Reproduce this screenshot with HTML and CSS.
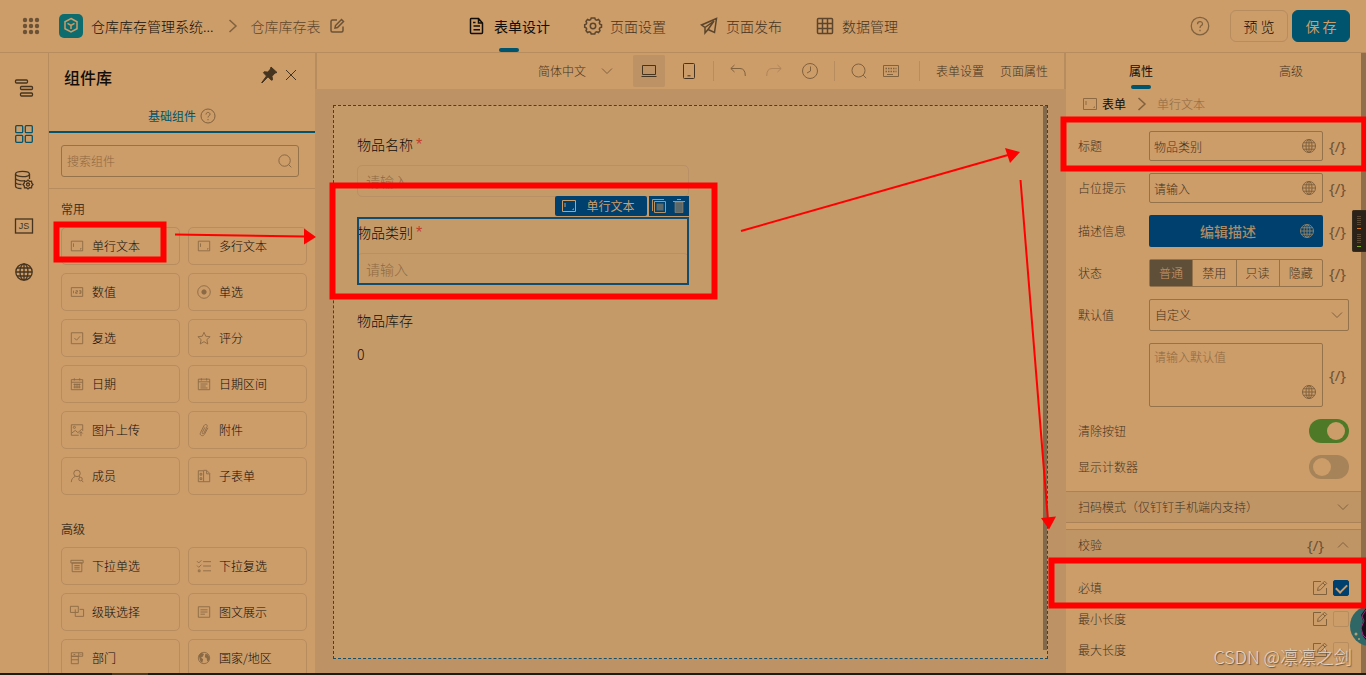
FILE: index.html
```html
<!DOCTYPE html>
<html lang="zh-CN">
<head>
<meta charset="utf-8">
<title>仓库库存表</title>
<link rel="stylesheet" href="styles.css">
</head>
<body>
<svg class="defs" aria-hidden="true">
  <symbol id="globe" viewBox="0 0 16 16"><circle cx="8" cy="8" r="6.500"/><ellipse cx="8" cy="8" rx="3" ry="6.500"/><path d="M8 1.500v13M1.500 8h13M2.500 4.800h11M2.500 11.200h11"/></symbol>
  <symbol id="field" viewBox="0 0 16 16"><path d="M1.500 2.500h13v11h-13zM4 5v4M12.500 10.500v1h-1"/></symbol>
  <symbol id="help" viewBox="0 0 16 16"><circle cx="8" cy="8" r="7"/><path d="M6 6.500c0-2.700 4-2.700 4-.2C10 7.800 8 7.600 8 9.500M8 11v1.200"/></symbol>
  <symbol id="search" viewBox="0 0 16 16"><circle cx="7.500" cy="7.500" r="6.500"/><path d="M12.200 12.200l3 3"/></symbol>
  <symbol id="edit" viewBox="0 0 16 16"><path d="M9 1.500H1.500v13h13V8M5.500 10.500l.7-3L12.500 1.200l2.200 2.200-6.300 6.400zM11 3l2 2"/></symbol>
  <symbol id="down" viewBox="0 0 12 12"><path d="M1 3.500l5 5 5-5"/></symbol>
  <symbol id="right" viewBox="0 0 10 16"><path d="M1.500 2l6.500 6-6.500 6"/></symbol>
</svg>

<header class="top">
  <div class="top-left">
    <svg class="dots" viewBox="0 0 18 18"><g fill="currentColor" stroke="none"><circle cx="3" cy="3" r="2.200"/><circle cx="9" cy="3" r="2.200"/><circle cx="15" cy="3" r="2.200"/><circle cx="3" cy="9" r="2.200"/><circle cx="9" cy="9" r="2.200"/><circle cx="15" cy="9" r="2.200"/><circle cx="3" cy="15" r="2.200"/><circle cx="9" cy="15" r="2.200"/><circle cx="15" cy="15" r="2.200"/></g></svg>
    <svg class="logo" viewBox="0 0 24 24"><path d="M12 4.500l6 3.300v6.900L12 18l-6-3.300V7.800zM8.500 9.300L12 11.300l3.500-2M12 11.300V15"/></svg>
    <span class="app-name">仓库库存管理系统...</span>
    <svg class="sep"><use href="#right"/></svg>
    <span class="page-name">仓库库存表</span>
    <svg class="ic16 w2" viewBox="0 0 16 16"><path d="M8 2H3.500Q2 2 2 3.500v9Q2 14 3.500 14h9q1.500 0 1.500-1.500V8.500M6 10l.5-2.500 6-6 2 2-6 6z"/></svg>
  </div>
  <nav class="tabs">
    <a class="tab active" href="#"><svg class="ic18 w2" viewBox="0 0 18 18"><path d="M3 1.500Q2.500 1.500 2.500 2.500v13q0 1 1 1h10q1 0 1-1V6L10.500 1.500zM10.500 2v4h4M5.500 9h6.500M5.500 12.800h6.500M5 5.500h2.500"/></svg>表单设计</a>
    <a class="tab" href="#"><svg class="ic18 w2" viewBox="0 0 18 18"><path d="M7.200 1h3.600l.6 1.700 1.400.6 1.700-.8 1.500 1.900-.7 1.500.6 1.300 1.600.6v2.400l-1.600.6-.6 1.300.7 1.500-1.500 1.900-1.700-.8-1.400.6-.6 1.700H7.200l-.6-1.700-1.400-.6-1.700.8L2 13.600l.7-1.500-.6-1.300L.7 10.200V7.800l1.400-.6.6-1.300L2 4.400l1.500-1.900 1.700.8 1.400-.6z"/><circle cx="9" cy="9" r="2.700"/></svg>页面设置</a>
    <a class="tab" href="#"><svg class="ic18 w2" viewBox="0 0 18 18"><path d="M16.500 1.500L1.500 8l3.500 2.500v5.500l3-3.500 6.500 3zM5 10.500l9-6.500-6 8.500"/></svg>页面发布</a>
    <a class="tab" href="#"><svg class="ic18 w2" viewBox="0 0 18 18"><rect x="1.500" y="1.500" width="15" height="15" rx="1"/><path d="M6.500 2v14M11.500 2v14M2 6.500h14M2 11.500h14"/></svg>数据管理</a>
  </nav>
  <div class="top-right">
    <svg class="ic20"><use href="#help"/></svg>
    <button class="btn">预 览</button>
    <button class="btn primary">保 存</button>
  </div>
</header>

<main class="main">
  <aside class="rail">
    <svg viewBox="0 0 20 20"><rect x="1.500" y="2" width="12" height="3" rx="1"/><rect x="6.500" y="8.500" width="12" height="3" rx="1"/><rect x="6.500" y="15" width="12" height="3" rx="1"/></svg>
    <svg class="on" viewBox="0 0 20 20"><rect x="1.700" y="1.700" width="7" height="7" rx="1"/><rect x="11.300" y="1.700" width="7" height="7" rx="1"/><rect x="1.700" y="11.300" width="7" height="7" rx="1"/><rect x="11.300" y="11.300" width="7" height="7" rx="1"/></svg>
    <svg viewBox="0 0 20 20"><ellipse cx="8.500" cy="4" rx="7" ry="2.700"/><path d="M1.500 4v12c0 1.500 3 2.500 6 2.500M15.500 4v5M1.500 8.500c1 2 7 3 9.500 2M1.500 12.500c1 1.500 4 2 6 2"/><path d="M14 10l1.500 1.300 2-.2.3 2L19 14.500l-1.200 1.400-.3 2-2-.2L14 19l-1.500-1.300-2 .2-.3-2L9 14.500l1.200-1.400.3-2 2 .2z"/><circle cx="14" cy="14.500" r="1.500"/></svg>
    <svg viewBox="0 0 20 20"><rect x="1.500" y="3" width="17" height="14"/><text x="10" y="13" text-anchor="middle" class="js">JS</text></svg>
    <svg viewBox="0 0 20 20"><circle cx="10" cy="10" r="8.200"/><ellipse cx="10" cy="10" rx="4" ry="8.200"/><path d="M10 2v16M2 10h16M3 6h14M3 14h14"/></svg>
  </aside>

  <section class="library">
    <div class="lib-head">
      <h1>组件库</h1>
      <svg class="ic18 dark" viewBox="0 0 18 18"><path fill="currentColor" d="M11 1l6 5.500-2 .5-3 3.300.5 3.500-1 .5-3.500-3.500L2 17l-.3-.3L6.500 10 3.500 6.800l.7-1 3.600.3L10.500 3z"/></svg>
      <svg class="ic14 dark" viewBox="0 0 14 14"><path d="M2 2l10 10M12 2L2 12"/></svg>
    </div>
    <div class="lib-tab"><span>基础组件</span><svg class="ic16"><use href="#help"/></svg></div>
    <div class="lib-search"><label class="search-box"><input type="text" placeholder="搜索组件" aria-label="搜索组件"><svg class="ic14"><use href="#search"/></svg></label></div>
    <div class="groups">
      <h2>常用</h2>
      <div class="cards">
        <button class="card"><svg><use href="#field"/></svg>单行文本</button>
        <button class="card"><svg><use href="#field"/></svg>多行文本</button>
        <button class="card"><svg viewBox="0 0 16 16"><path d="M1.500 3h13v10h-13zM4 6.500v3M6.500 6.500h2v1.500h-2v1.500h2M10.500 6.500h2v3h-2M11 8h1.500"/></svg>数值</button>
        <button class="card"><svg viewBox="0 0 16 16"><circle cx="8" cy="8" r="7.200"/><circle cx="8" cy="8" r="2.500" fill="currentColor"/></svg>单选</button>
        <button class="card"><svg viewBox="0 0 16 16"><path d="M1.500 2h13v12.500h-13zM5 8l2.500 2.500L11.500 6"/></svg>复选</button>
        <button class="card"><svg viewBox="0 0 16 16"><path d="M8 1.500l2 4.500 5 .5-3.700 3.300 1 5L8 12.200 3.700 14.800l1-5L1 6.500 6 6z"/></svg>评分</button>
        <button class="card"><svg viewBox="0 0 16 16"><path d="M1.500 3h13v11.500h-13zM1.500 6h13M5 1.500V4M11 1.500V4M4 8.500h8M4 11.500h8M5.500 7.500V13M8 7.500V13M10.500 7.500V13"/></svg>日期</button>
        <button class="card"><svg viewBox="0 0 16 16"><path d="M1.500 2.500h13v12h-13zM1.500 5.500h13M5 1.500V4M11 1.500V4M4 8h8M4 10.300h6M4 12.500h8"/></svg>日期区间</button>
        <button class="card"><svg viewBox="0 0 16 16"><path d="M10 14H1.500V2h13v7M2 11.500l4-3 3 2.500 4.500-4M12.500 15v-5M10.500 12l2-2 2 2"/><circle cx="5" cy="5" r="1.200"/></svg>图片上传</button>
        <button class="card"><svg viewBox="0 0 16 16"><path d="M12.500 5.500L8.500 13c-2 3-6 1-4.500-2l4-8c1.500-2.500 4.500-1 3.500 1.200L8 11.500c-1 1.500-2.500.5-2-.7L9 5"/></svg>附件</button>
        <button class="card"><svg viewBox="0 0 16 16"><circle cx="8" cy="5" r="3.700"/><path d="M1.500 15c0-3.500 2-5.500 4.500-6.500M10 8.500l1.500.5"/><circle cx="12" cy="11.500" r="2"/><path d="M13.500 13l1.500 2"/></svg>成员</button>
        <button class="card"><svg viewBox="0 0 16 16"><path d="M1.500 2h6v12.500h-6zM7.500 1.500h3.500l3.500 3.500v9.500h-7M11 2v3.500h3M3.500 5h2v2h-2zM3.500 10h2v2h-2z"/></svg>子表单</button>
      </div>
      <h2 class="second">高级</h2>
      <div class="cards">
        <button class="card"><svg viewBox="0 0 16 16"><path d="M1 1.500h14v3H1zM2.500 4.500h11v10h-11zM5 7.500h6M5 9.500h6M5 11.500h6"/></svg>下拉单选</button>
        <button class="card"><svg viewBox="0 0 16 16"><path d="M0 2.500l2 2 3-3M0 7.500l2 2 3-3M7 3h9M7 8h9M7 13.500h9M1.500 12.500h2v2h-2z"/></svg>下拉复选</button>
        <button class="card"><svg viewBox="0 0 16 16"><path d="M6 8.500H.5v-7h9V5M6 5v8h9.500V5H11M6 8.500h3.500V5"/></svg>级联选择</button>
        <button class="card"><svg viewBox="0 0 16 16"><path d="M1.500 2h13v12h-13zM4 5.500h8M4 8h8M4 10.500h5"/></svg>图文展示</button>
        <button class="card"><svg viewBox="0 0 16 16"><path d="M1.500 2h13v4h-13zM1.500 6h8v8.500h-8zM1.500 10h8M10 2v4M4 4h2M12 4h1"/></svg>部门</button>
        <button class="card"><svg viewBox="0 0 16 16"><circle cx="8" cy="8" r="6.500"/><path fill="currentColor" stroke="none" d="M2 5l3-3 3 1.500L6.500 6.500l-2 1 2.500 2-1 4-2-1.500L3 9zM9.500 3l3 1 2 4-1.500 4-1.500-1-.5-3L9 7z"/></svg>国家/地区</button>
      </div>
    </div>
  </section>

  <section class="center">
    <div class="toolbar">
      <label class="lang"><select aria-label="语言"><option>简体中文</option></select><svg class="ic12"><use href="#down"/></svg></label>
      <div class="tools wide">
        <button class="tool on" aria-label="电脑"><svg class="dark" viewBox="0 0 16 16"><path d="M1.500 2.500h13v9h-13zM.5 13.500h15"/></svg></button>
        <button class="tool" aria-label="手机"><svg class="dark" viewBox="0 0 16 16"><rect x="2.500" y=".5" width="11" height="15" rx="1"/><path d="M6.500 12.800h3"/></svg></button>
      </div>
      <i class="bar"></i>
      <div class="tools">
        <button class="tool" aria-label="撤销"><svg viewBox="0 0 16 16"><path d="M4.500 2L.8 5.500 4.500 9M1 5.500h9Q15.300 5.500 15.300 13"/></svg></button>
        <button class="tool faint" aria-label="重做"><svg viewBox="0 0 16 16"><path d="M11.500 2l3.700 3.500L11.500 9M15 5.500H6Q.7 5.500.7 13"/></svg></button>
        <button class="tool" aria-label="历史"><svg viewBox="0 0 16 16"><circle cx="8" cy="8" r="7.500"/><path d="M8.500 3.500V8l-3.500 2"/></svg></button>
      </div>
      <i class="bar"></i>
      <div class="tools tight">
        <button class="tool" aria-label="搜索"><svg><use href="#search"/></svg></button>
        <button class="tool" aria-label="键盘"><svg viewBox="0 0 16 16"><path d="M.5 2.500h15v11H.5zM4 11.500h6"/><path d="M2.500 5.500h11M2.500 8.500h11" stroke-width="1.500" stroke-dasharray="1.500 1"/></svg></button>
      </div>
      <i class="bar last"></i>
      <a href="#">表单设置</a>
      <a href="#">页面属性</a>
    </div>
    <div class="stage">
      <div class="sheet">
        <div class="form">
          <div class="fitem"><label for="f1">物品名称 <em>*</em></label><input id="f1" type="text" placeholder="请输入"></div>
          <div class="fitem selected">
            <div class="chips"><span class="chip"><svg><use href="#field"/></svg>单行文本</span><span class="chip acts">
              <svg viewBox="0 0 16 16"><path d="M3.500 3.500h11v11h-11zM1.500 13V1.500H13"/><path fill="currentColor" stroke="none" opacity=".5" d="M5.500 5.500h7v7h-7z"/></svg>
              <svg viewBox="0 0 16 16"><path d="M2 3.500h12M6 1.500h4"/><path fill="currentColor" fill-opacity=".5" stroke-opacity=".5" d="M4 4v10.500h8V4z"/></svg></span></div>
            <label for="f2">物品类别 <em>*</em></label><input id="f2" type="text" placeholder="请输入">
          </div>
          <div class="fitem"><span class="flabel">物品库存</span><output>0</output></div>
        </div>
        <div class="sheet-scroll"></div>
      </div>
    </div>
  </section>

  <aside class="props">
    <div class="ptabs"><a class="active" href="#">属性</a><a href="#">高级</a></div>
    <div class="crumb"><svg class="ic16"><use href="#field"/></svg><b>表单</b><svg class="sep"><use href="#right"/></svg><span>单行文本</span></div>
    <div class="rows">
      <div class="row"><label for="p1">标题</label><div class="ctl"><input id="p1" type="text" value="物品类别"><svg class="ic16 inner"><use href="#globe"/></svg></div><span class="code">{/}</span></div>
      <div class="row"><label for="p2">占位提示</label><div class="ctl"><input id="p2" type="text" value="请输入"><svg class="ic16 inner"><use href="#globe"/></svg></div><span class="code">{/}</span></div>
      <div class="row"><span>描述信息</span><div class="ctl"><button class="desc">编辑描述</button><svg class="ic16 inner light"><use href="#globe"/></svg></div><span class="code">{/}</span></div>
      <div class="row"><span>状态</span><div class="ctl seg"><label><input type="radio" name="st" checked>普通</label><label><input type="radio" name="st">禁用</label><label><input type="radio" name="st">只读</label><label><input type="radio" name="st">隐藏</label></div><span class="code">{/}</span></div>
      <div class="row"><label for="p3">默认值</label><div class="ctl full"><select id="p3"><option>自定义</option></select><svg class="ic12 inner"><use href="#down"/></svg></div></div>
      <div class="row"><span></span><div class="ctl area"><textarea placeholder="请输入默认值" aria-label="默认值"></textarea><svg class="ic16 inner"><use href="#globe"/></svg></div><span class="code">{/}</span></div>
      <div class="row sw"><label for="s1">清除按钮</label><input id="s1" class="switch" type="checkbox" checked></div>
      <div class="row sw"><label for="s2">显示计数器</label><input id="s2" class="switch" type="checkbox"></div>
    </div>
    <div class="section"><span>扫码模式（仅钉钉手机端内支持）</span><svg class="ic12"><use href="#down"/></svg></div>
    <div class="section"><span>校验</span><span class="code">{/}</span><svg class="ic12 up"><use href="#down"/></svg></div>
    <div class="checks">
      <div class="check"><label for="c1">必填</label><svg class="ic16"><use href="#edit"/></svg><input id="c1" type="checkbox" checked></div>
      <div class="check"><label for="c2">最小长度</label><svg class="ic16"><use href="#edit"/></svg><input id="c2" type="checkbox"></div>
      <div class="check"><label for="c3">最大长度</label><svg class="ic16"><use href="#edit"/></svg><input id="c3" type="checkbox"></div>
    </div>
  </aside>
</main>
<footer class="strip"><i></i></footer>

<svg class="gadget" viewBox="0 0 14 42"><rect width="20" height="42" rx="3" fill="#2b231a"/><path d="M5 6.500h4M5 8.500h4M5 10.500h4M5 12.500h4M5 14.500h4M5 24.500h4M5 26.500h4M5 28.500h4M5 30.500h4M5 32.500h4" stroke="#5c4a36"/><path d="M5 18.500h4" stroke="#e0731a"/><path d="M5 36.500h4" stroke="#7fae1c"/></svg>
<svg class="avatar" viewBox="0 0 16 40"><circle cx="20" cy="20" r="20" fill="#2f6767"/><path d="M16 2L11 9l2 6-2 8 2 7 3 4z" fill="#15101a"/><path d="M16 4l-4 6 2 5-3 7 2 7 3 3" fill="none" stroke="#9b2b7c"/><circle cx="6" cy="28" r="1.500" fill="#b7a071"/><circle cx="9" cy="33" r="1" fill="#b7a071"/></svg>
<svg class="marks" viewBox="0 0 1366 675">
  <g fill="none" stroke="#f00" stroke-width="6"><path d="M56.500 224.500h107v35h-107zM332.500 185.500h382v111h-382zM1063.500 119.500h301v49h-301zM1051.500 560.500h313v45h-313z"/></g>
  <g fill="none" stroke="#f00" stroke-width="2"><path d="M175 234.500L306 236.500M741 231L1008 155M1020.500 180L1048 520"/></g>
  <path fill="#f00" d="M304 228.500v16l12-7.500zM1005 148l15 4-10 11zM1041 518l15-1.500-7 13z"/>
</svg>
<div class="watermark">CSDN @凛凛之剑</div>
</body>
</html>
```
FILE: styles.css
```css
:root {
  --bg: #cc9c69;
  --shade: #bd9265;
  --line: #b78d60;
  --edge: #94734c;
  --ink: #100d0a;
  --text: #45341f;
  --muted: #6b5237;
  --soft: #80623f;
  --faint: #8d6a43;
  --teal: #00546e;
  --blue: #00406f;
}
* { box-sizing: border-box; }
body {
  margin: 0;
  height: 100vh;
  display: flex;
  flex-direction: column;
  overflow: hidden;
  position: relative;
  background: var(--bg);
  color: var(--text);
  font: 300 12px/20px "Noto Sans CJK SC", sans-serif;
}
button, input, select, textarea { font: inherit; color: inherit; background: none; border: 0; padding: 0; margin: 0; }
select, input { appearance: none; outline: 0; }
a { color: inherit; text-decoration: none; }
h1, h2 { margin: 0; }
svg { flex: none; fill: none; stroke: currentColor; stroke-width: 1; overflow: visible; }
::placeholder { color: var(--faint); opacity: 1; }
.defs { position: absolute; width: 0; height: 0; }
.ic12 { width: 12px; height: 12px; }
.ic14 { width: 14px; height: 14px; }
.ic16 { width: 16px; height: 16px; }
.ic18 { width: 18px; height: 18px; }
.ic20 { width: 20px; height: 20px; }
.w2 { stroke-width: 1.5; }
.dark { color: var(--text); }
.sep { width: 10px; height: 16px; stroke-width: 1.5; color: var(--soft); }

.top {
  flex: none;
  height: 53px;
  display: grid;
  grid-template-columns: 1fr auto 1fr;
  align-items: center;
  border-bottom: 1px solid var(--line);
  font-size: 14px;
}
.top-left { display: flex; align-items: center; padding-left: 22px; gap: 8px; color: var(--muted); }
.dots { width: 18px; height: 18px; margin-right: 11px; }
.logo { width: 24px; height: 24px; border-radius: 5px; background: #0d6d6e; color: var(--bg); stroke-width: 1.5; }
.app-name { color: var(--ink); margin-right: 6px; }
.page-name { margin-left: 5px; color: #5b452c; }
.tabs { display: flex; gap: 34px; height: 52px; }
.tab { position: relative; display: flex; align-items: center; gap: 8px; color: var(--text); }
.tab svg { color: #5b452c; }
.tab.active, .tab.active svg { color: var(--ink); font-weight: 400; }
.tab.active::after { content: ""; position: absolute; left: 50%; bottom: 0; width: 20px; height: 4px; margin-left: -10px; border-radius: 2px; background: var(--teal); }
.top-right { display: flex; justify-content: flex-end; align-items: center; padding-right: 16px; color: var(--soft); }
.btn { width: 58px; height: 32px; border: 1px solid var(--line); border-radius: 6px; color: var(--ink); margin-left: 4px; }
.ic20 + .btn { margin-left: 20px; }
.btn.primary { border-color: var(--teal); background: var(--teal); color: var(--bg); font-weight: 400; }

.main { flex: 1; min-height: 0; display: flex; }
.rail { width: 49px; border-right: 1px solid var(--line); display: flex; flex-direction: column; align-items: center; gap: 26px; padding-top: 25px; }
.rail svg { width: 20px; height: 20px; stroke-width: 1.3; }
.rail .on { color: var(--teal); }
.rail .js { font: 400 9px "Liberation Sans", sans-serif; fill: currentColor; stroke: none; }

.library { width: 266px; display: flex; flex-direction: column; }
.lib-head { display: flex; align-items: center; height: 48px; padding: 0 17px 0 15px; gap: 6px; }
.lib-head h1 { flex: 1; font-size: 16px; line-height: 24px; font-weight: 500; color: var(--ink); }
.lib-head svg { margin-bottom: 4px; }
.lib-tab { display: flex; justify-content: center; align-items: center; gap: 4px; height: 32px; border-bottom: 2px solid var(--teal); color: var(--teal); font-weight: 400; }
.lib-tab svg { color: var(--soft); }
.lib-search { padding: 12px 16px 11px 12px; border-bottom: 1px solid var(--line); }
.search-box { display: flex; align-items: center; height: 32px; padding: 0 6px 0 5px; border: 1px solid var(--edge); border-radius: 3px; color: var(--soft); }
.search-box input { flex: 1; min-width: 0; }
.groups { flex: 1; min-height: 0; overflow: hidden; padding: 10px 8px 0 12px; }
.groups h2 { font-size: 12px; font-weight: 400; line-height: 20px; margin-bottom: 8px; }
.groups .second { margin-top: 24px; }
.cards { display: grid; grid-template-columns: 1fr 1fr; gap: 8px; }
.card { display: flex; align-items: center; gap: 8px; height: 38px; padding: 0 8px; border: 1px solid var(--line); border-radius: 5px; color: var(--ink); }
.card svg { width: 14px; height: 14px; color: #8a6945; }

.center { flex: 1; min-width: 0; display: flex; flex-direction: column; }
.toolbar { height: 36px; display: flex; align-items: center; justify-content: flex-end; padding-right: 16px; border-left: 2px solid var(--line); border-right: 2px solid var(--line); }
.toolbar a + a { margin-left: 16px; }
.lang { display: flex; align-items: center; gap: 14px; margin-right: 20px; }
.lang select { width: 49px; }
.lang svg { color: var(--soft); }
.tools { display: flex; gap: 4px; }
.tools.wide { gap: 8px; }
.tools.tight { gap: 0; }
.tool { width: 32px; height: 32px; border-radius: 2px; display: flex; align-items: center; justify-content: center; color: var(--soft); }
.tool.on { background: var(--shade); }
.tool.faint { color: #b08559; }
.tool svg { width: 16px; height: 16px; }
.bar { width: 1px; height: 20px; margin: 0 8px; background: var(--line); }
.bar.last { margin: 0 16px 0 12px; }
.stage { flex: 1; min-height: 0; padding: 16px 18px 14px; background: var(--shade); display: flex; }
.sheet { flex: 1; display: flex; justify-content: space-between; background: #c49a69; border: 1px dashed #174e68; }
.form { flex: 1; display: flex; flex-direction: column; gap: 20px; padding: 23px 23px 0; font-size: 14px; color: var(--ink); }
.fitem { position: relative; width: 50%; display: flex; flex-direction: column; }
.fitem label, .flabel { height: 30px; line-height: 30px; margin-bottom: 6px; }
.fitem em { color: #c0402a; font: 400 16px/20px "Liberation Sans", sans-serif; }
.fitem input { width: 100%; height: 32px; padding: 0 8px; border: 1px solid #b98f65; border-radius: 5px; }
.fitem output { line-height: 26px; }
.selected { outline: 2px solid #124c70; outline-offset: -2px; }
.chips { position: absolute; right: 0; bottom: 100%; margin-bottom: 1px; display: flex; gap: 2px; font-size: 12px; color: var(--bg); }
.chip { display: flex; align-items: center; gap: 9px; height: 20px; padding: 0 12px 0 6px; background: var(--blue); border-radius: 2px; font-weight: 400; }
.chip svg { width: 16px; height: 16px; }
.chip.acts { gap: 4px; padding: 0 2px; border-radius: 0; }
.chip.acts svg { color: #b59168; }
.sheet-scroll { width: 4px; margin-bottom: 8px; background: #82694b; }

.props { width: 300px; border-right: 5px solid #8f6e49; }
.ptabs { display: grid; grid-template-columns: 1fr 1fr; height: 36px; margin-right: -5px; text-align: center; line-height: 36px; }
.ptabs a { position: relative; }
.ptabs .active { color: var(--ink); font-weight: 400; }
.ptabs .active::after { content: ""; position: absolute; left: 50%; bottom: 0; width: 20px; height: 4px; margin-left: -10px; border-radius: 2px; background: var(--teal); }
.crumb { display: flex; align-items: center; gap: 4px; height: 30px; padding-left: 16px; color: var(--faint); }
.crumb b { color: var(--ink); font-weight: 400; margin-right: 7px; }
.crumb span { margin-left: 6px; }
.rows { display: flex; flex-direction: column; gap: 12px; padding: 12px; }
.row { display: grid; grid-template-columns: 71px 174px 1fr; align-items: center; }
.ctl { position: relative; display: flex; }
.ctl.full { grid-column: span 2; }
.ctl > input, .ctl > select, .ctl > textarea { width: 100%; height: 30px; padding: 0 4px; border: 1px solid var(--edge); border-radius: 2px; }
.ctl > select { height: 32px; padding: 0 5px; }
.ctl > textarea { height: 64px; padding-top: 3px; resize: none; display: block; }
.inner { position: absolute; right: 6px; top: 50%; margin-top: -8px; color: var(--soft); }
.ic12.inner { margin-top: -6px; }
.area .inner { top: auto; bottom: 7px; }
.light { right: 8px; color: #8a8068; }
.code { font: 400 15px/20px "Noto Sans", sans-serif; padding-left: 6px; color: var(--muted); }
.desc { width: 100%; height: 32px; padding-right: 16px; border-radius: 2px; background: var(--blue); color: #ac8b65; font-size: 14px; font-weight: 500; }
.seg { border: 1px solid var(--edge); border-radius: 2px; }
.seg label { flex: 1; height: 26px; line-height: 26px; text-align: center; border-left: 1px solid var(--edge); }
.seg label:first-child { border-left: 0; }
.seg input { position: absolute; opacity: 0; }
.seg label:has(:checked) { background: #5f4e38; color: var(--bg); }
.row.sw { display: flex; justify-content: space-between; }
.switch { width: 40px; height: 24px; border-radius: 12px; padding: 3px 4px; background: #a7835a; }
.switch::after { content: ""; display: block; width: 18px; height: 18px; border-radius: 50%; background: var(--bg); }
.switch:checked { background: #4e7a28; }
.switch:checked::after { margin-left: auto; }
.section { display: flex; align-items: center; justify-content: space-between; height: 32px; padding: 0 12px; margin-bottom: 6px; background: #c09566; border: solid #ab8258; border-width: 1px 0; }
.section .code { margin: 0 13px 0 auto; }
.section svg { color: var(--soft); }
.up { transform: rotate(180deg); }
.checks { padding: 5px 12px 0; }
.check { display: flex; align-items: center; height: 31px; }
.check label { flex: 1; }
.check svg { color: var(--soft); margin-right: 5px; }
.check input { width: 16px; height: 16px; border: 1px solid var(--line); border-radius: 2px; }
.check input:checked { background: var(--blue); border-color: var(--blue); }
.check input:checked::after { content: ""; display: block; width: 5px; height: 9px; margin: 1px 0 0 4px; border: solid var(--bg); border-width: 0 2px 2px 0; transform: rotate(45deg); }
.strip { flex: none; height: 2px; background: #1c1d14; display: flex; }
.strip i { width: 36px; margin-left: 112px; background: #4a3a2a; }

.gadget { position: absolute; right: 0; top: 210px; width: 14px; height: 42px; overflow: hidden; }
.avatar { position: absolute; right: 0; top: 606px; width: 16px; height: 40px; overflow: hidden; stroke: none; }
.marks { position: absolute; left: 0; top: 0; width: 100%; height: 100%; pointer-events: none; stroke: none; }
.watermark { position: absolute; right: 14px; bottom: 7px; font-size: 18px; line-height: 24px; color: #e2d6c8; text-shadow: 1px 1px 1px #6b5237; }
```
